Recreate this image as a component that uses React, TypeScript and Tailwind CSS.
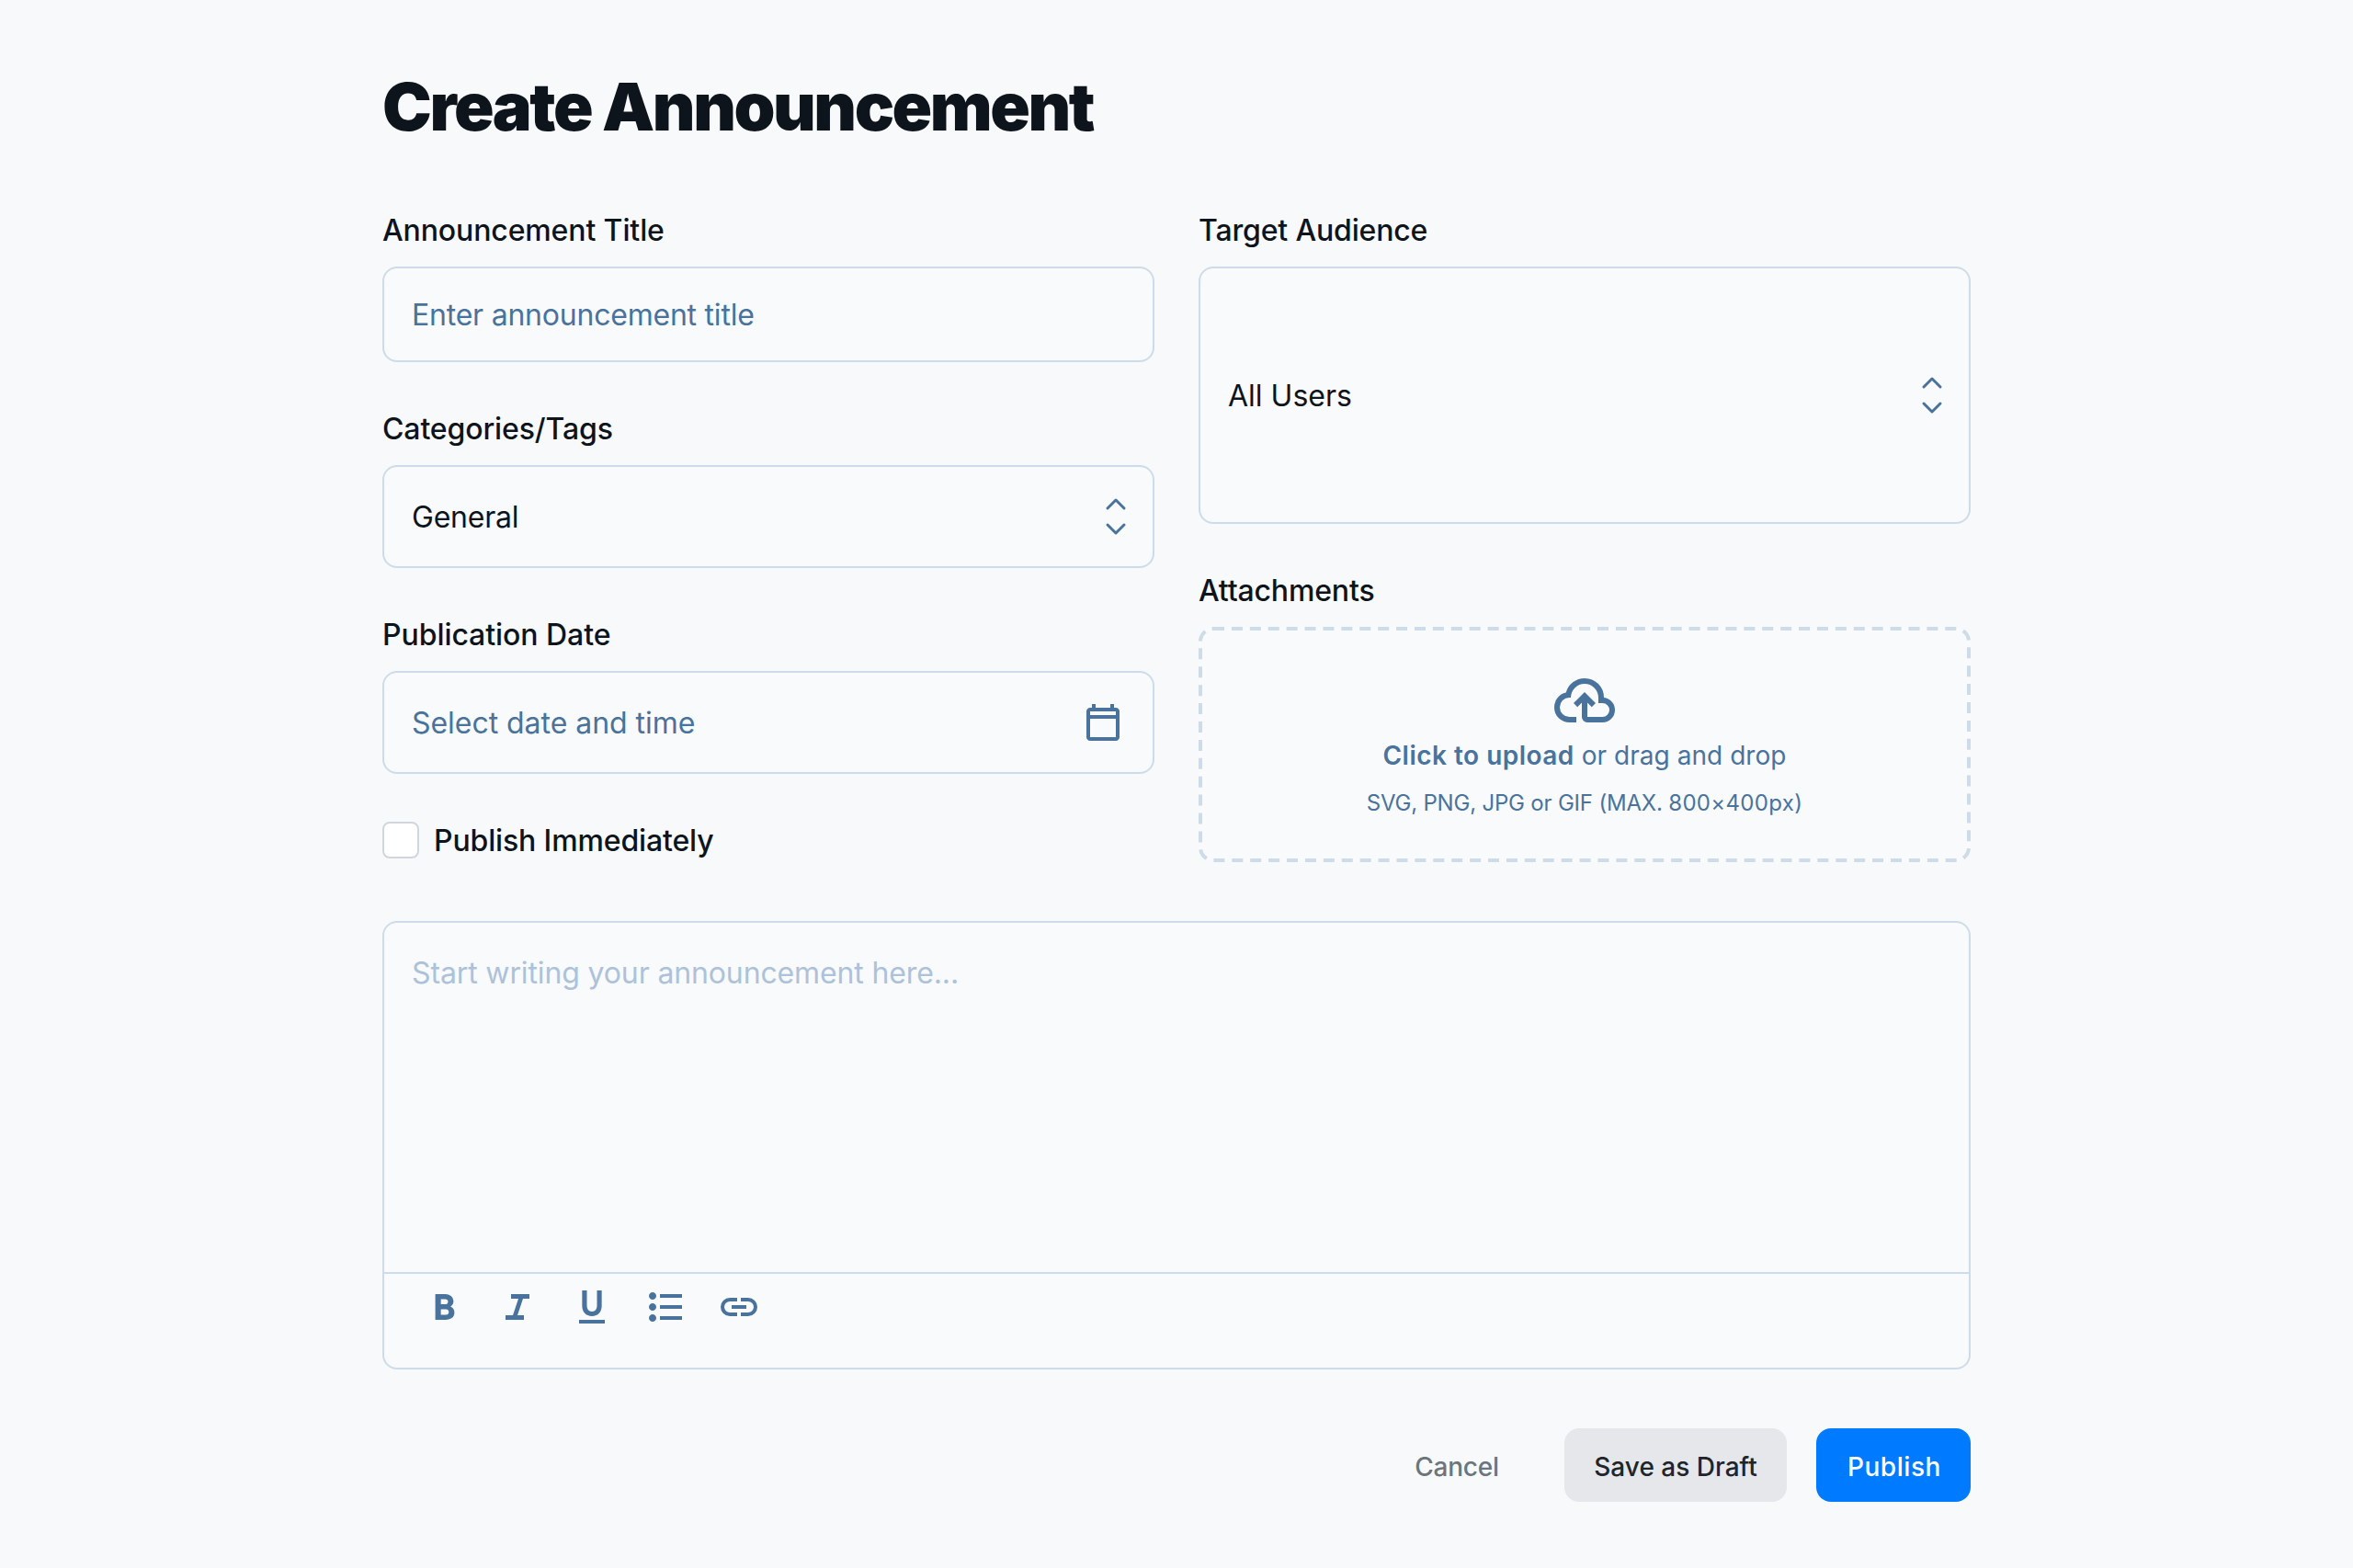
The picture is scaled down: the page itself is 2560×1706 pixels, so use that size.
import type { ReactNode } from "react";

const ICONS = {
  bold: "M272-200v-560h221q65 0 120 40t55 111q0 51-23 78.5T602-491q25 11 55.5 41t30.5 90q0 89-65 124.5T501-200H272Zm121-112h104q48 0 58.5-24.5T566-372q0-11-10.5-35.5T494-432H393v120Zm0-228h93q33 0 48-17t15-38q0-24-17-39t-44-15h-95v109Z",
  italic: "M200-200v-100h160l120-360H320v-100h400v100H580L460-300h140v100H200Z",
  underline:
    "M200-120v-80h560v80H200Zm123-223q-56-63-56-167v-330h103v336q0 56 28 91t82 35q54 0 82-35t28-91v-336h103v330q0 104-56 167t-157 63q-101 0-157-63Z",
  list: "M360-200v-80h480v80H360Zm0-240v-80h480v80H360Zm0-240v-80h480v80H360ZM200-160q-33 0-56.5-23.5T120-240q0-33 23.5-56.5T200-320q33 0 56.5 23.5T280-240q0 33-23.5 56.5T200-160Zm0-240q-33 0-56.5-23.5T120-480q0-33 23.5-56.5T200-560q33 0 56.5 23.5T280-480q0 33-23.5 56.5T200-400Zm0-240q-33 0-56.5-23.5T120-720q0-33 23.5-56.5T200-800q33 0 56.5 23.5T280-720q0 33-23.5 56.5T200-640Z",
  link: "M440-280H280q-83 0-141.5-58.5T80-480q0-83 58.5-141.5T280-680h160v80H280q-50 0-85 35t-35 85q0 50 35 85t85 35h160v80ZM320-440v-80h320v80H320Zm200 160v-80h160q50 0 85-35t35-85q0-50-35-85t-85-35H520v-80h160q83 0 141.5 58.5T880-480q0 83-58.5 141.5T680-280H520Z",
  calendar:
    "M200-80q-33 0-56.5-23.5T120-160v-560q0-33 23.5-56.5T200-800h40v-80h80v80h320v-80h80v80h40q33 0 56.5 23.5T840-720v560q0 33-23.5 56.5T760-80H200Zm0-80h560v-400H200v400Zm0-480h560v-80H200v80Z",
  upload:
    "M260-160q-91 0-155.5-63T40-377q0-78 47-139t123-78q25-92 100-149t170-57q117 0 198.5 81.5T760-520q69 8 114.5 59.5T920-340q0 75-52.5 127.5T740-160H520q-33 0-56.5-23.5T440-240v-206l-64 62-56-56 160-160 160 160-56 56-64-62v206h220q42 0 71-29t29-71q0-42-29-71t-71-29h-60v-80q0-83-58.5-141.5T480-720q-83 0-141.5 58.5T280-520h-20q-58 0-99 41t-41 99q0 58 41 99t99 41h100v80H260Z",
};

function Icon({ name, className }: { name: keyof typeof ICONS; className: string }) {
  return (
    <svg viewBox="0 -960 960 960" fill="currentColor" className={className}>
      <path d={ICONS[name]} />
    </svg>
  );
}

function SelectArrows() {
  return (
    <svg viewBox="0 0 256 256" fill="currentColor" className="size-6 shrink-0 text-[#49739c]">
      <path d="M181.66,170.34a8,8,0,0,1,0,11.32l-48,48a8,8,0,0,1-11.32,0l-48-48a8,8,0,0,1,11.32-11.32L128,212.69l42.34-42.34A8,8,0,0,1,181.66,170.34Zm-96-84.68L128,43.31l42.34,42.34a8,8,0,0,0,11.32-11.32l-48-48a8,8,0,0,0-11.32,0l-48,48A8,8,0,0,0,85.66,85.66Z" />
    </svg>
  );
}

function Field({ label, tracking, children }: { label: string; tracking: string; children: ReactNode }) {
  return (
    <div className="flex flex-col gap-2">
      <span className={`text-base font-medium ${tracking}`}>{label}</span>
      {children}
    </div>
  );
}

function Select({ value, className }: { value: string; className: string }) {
  return (
    <button
      type="button"
      className={`flex items-center justify-between rounded-lg border border-[#cedbe8] bg-slate-50 pr-2 pl-[15px] text-base ${className}`}
    >
      <span>{value}</span>
      <SelectArrows />
    </button>
  );
}

const TOOLS = ["bold", "italic", "underline", "list", "link"] as const;

export default function App() {
  return (
    <div className="h-[1706px] w-[2560px] overflow-hidden bg-[#f8f9fb]">
      <div className="flex h-[853px] w-[1280px] origin-top-left scale-200 justify-center font-['Inter',sans-serif] text-[#0d141c]">
        <main className="flex w-[864px] flex-col pt-9">
          <h1 className="text-4xl leading-tight font-black tracking-[-0.034em]">Create Announcement</h1>

          <div className="mt-8 grid grid-cols-2 gap-6">
            <div className="flex flex-col gap-6">
              <Field label="Announcement Title" tracking="tracking-[-0.06px]">
                <input
                  placeholder="Enter announcement title"
                  className="h-[52px] rounded-lg border border-[#cedbe8] bg-slate-50 px-[15px] text-base tracking-[-0.11px] placeholder:text-[#49739c]"
                />
              </Field>
              <Field label="Categories/Tags" tracking="tracking-[-0.06px]">
                <Select value="General" className="h-14 tracking-[-0.12px]" />
              </Field>
              <Field label="Publication Date" tracking="tracking-[-0.03px]">
                <div className="flex h-14 items-center justify-between rounded-lg border border-[#cedbe8] bg-slate-50 px-[15px] text-base tracking-[-0.02px] text-[#49739c]">
                  <span>Select date and time</span>
                  <Icon name="calendar" className="size-6" />
                </div>
              </Field>
              <label className="flex h-6 items-center gap-2 text-base font-medium tracking-[-0.07px]">
                <input type="checkbox" className="size-5 appearance-none rounded-sm border border-gray-300 bg-white" />
                Publish Immediately
              </label>
            </div>

            <div className="flex flex-col gap-6">
              <Field label="Target Audience" tracking="tracking-[-0.08px]">
                <Select value="All Users" className="h-[140px]" />
              </Field>
              <Field label="Attachments" tracking="tracking-[-0.08px]">
                <div className="flex h-32 flex-col items-center rounded-lg border-2 border-dashed border-[#cedbe8] bg-slate-50 pt-5 text-[#49739c]">
                  <Icon name="upload" className="size-9" />
                  <p className="mt-0.5 text-sm tracking-[0.02px]">
                    <span className="font-semibold tracking-[0.24px]">Click to upload</span> or drag and drop
                  </p>
                  <p className="mt-2 text-xs tracking-[-0.1px]">
                    SVG, PNG, JPG or GIF (MAX. <span className="tracking-[0.16px]">800×400px)</span>
                  </p>
                </div>
              </Field>
            </div>
          </div>

          <div className="mt-8 flex h-[244px] flex-col rounded-lg border border-[#cedbe8] bg-slate-50">
            <textarea
              placeholder="Start writing your announcement here..."
              className="h-[190px] resize-none p-[15px] text-base tracking-[-0.065px] placeholder:text-[#adc2da]"
            />
            <div className="flex gap-4 border-t border-[#cedbe8] px-[21px] pt-1.5 text-[#49739c]">
              {TOOLS.map((tool) => (
                <button key={tool} type="button">
                  <Icon name={tool} className="size-6" />
                </button>
              ))}
            </div>
          </div>

          <div className="mt-8 flex justify-end gap-4 text-sm font-medium">
            <button type="button" className="h-10 w-[84px] rounded-lg pt-0.5 pr-px tracking-[-0.1px] text-[#6c757d]">
              Cancel
            </button>
            <button type="button" className="h-10 w-[121px] rounded-lg bg-gray-200 pt-0.5 text-[#212529]">
              Save as Draft
            </button>
            <button type="button" className="h-10 w-[84px] rounded-lg bg-[#007bff] pt-0.5 pl-px tracking-[0.02em] text-white">
              Publish
            </button>
          </div>
        </main>
      </div>
    </div>
  );
}
